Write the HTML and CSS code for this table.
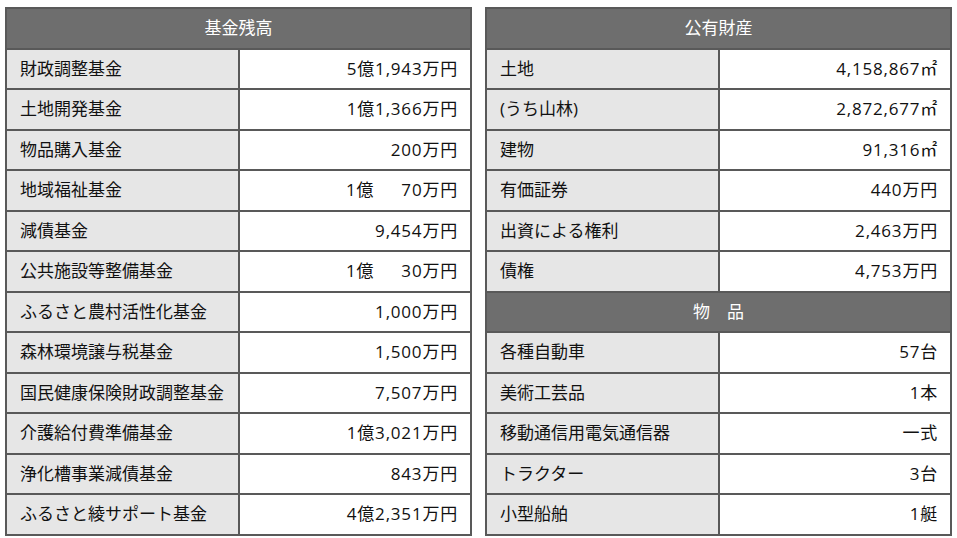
FILE: index.html
```html
<!DOCTYPE html>
<html lang="ja">
<head>
<meta charset="utf-8">
<link rel="stylesheet" href="styles.css">
</head>
<body>
<div class="wrap">
  <table class="tbl">
    <tr><th colspan="2">基金残高</th></tr>
    <tr><td class="k">財政調整基金</td><td class="v">5億1,943万円</td></tr>
    <tr><td class="k">土地開発基金</td><td class="v">1億1,366万円</td></tr>
    <tr><td class="k">物品購入基金</td><td class="v">200万円</td></tr>
    <tr><td class="k">地域福祉基金</td><td class="v">1億&emsp;&ensp;70万円</td></tr>
    <tr><td class="k">減債基金</td><td class="v">9,454万円</td></tr>
    <tr><td class="k">公共施設等整備基金</td><td class="v">1億&emsp;&ensp;30万円</td></tr>
    <tr><td class="k">ふるさと農村活性化基金</td><td class="v">1,000万円</td></tr>
    <tr><td class="k">森林環境譲与税基金</td><td class="v">1,500万円</td></tr>
    <tr><td class="k">国民健康保険財政調整基金</td><td class="v">7,507万円</td></tr>
    <tr><td class="k">介護給付費準備基金</td><td class="v">1億3,021万円</td></tr>
    <tr><td class="k">浄化槽事業減債基金</td><td class="v">843万円</td></tr>
    <tr><td class="k">ふるさと綾サポート基金</td><td class="v">4億2,351万円</td></tr>
  </table>
  <table class="tbl">
    <tr><th colspan="2">公有財産</th></tr>
    <tr><td class="k">土地</td><td class="v">4,158,867㎡</td></tr>
    <tr><td class="k">(うち山林)</td><td class="v">2,872,677㎡</td></tr>
    <tr><td class="k">建物</td><td class="v">91,316㎡</td></tr>
    <tr><td class="k">有価証券</td><td class="v">440万円</td></tr>
    <tr><td class="k">出資による権利</td><td class="v">2,463万円</td></tr>
    <tr><td class="k">債権</td><td class="v">4,753万円</td></tr>
    <tr><th colspan="2">物&emsp;品</th></tr>
    <tr><td class="k">各種自動車</td><td class="v">57台</td></tr>
    <tr><td class="k">美術工芸品</td><td class="v">1本</td></tr>
    <tr><td class="k">移動通信用電気通信器</td><td class="v">一式</td></tr>
    <tr><td class="k">トラクター</td><td class="v">3台</td></tr>
    <tr><td class="k">小型船舶</td><td class="v">1艇</td></tr>
  </table>
</div>
</body>
</html>
```
FILE: styles.css
```css
html, body {
  margin: 0;
  padding: 0;
  background: #ffffff;
}
body {
  font-family: "Open Sans", "Noto Sans CJK JP", sans-serif;
  color: #111111;
}
.wrap {
  display: flex;
  gap: 13px;
  padding: 7px 0 0 5px;
}
.tbl {
  width: 467px;
  border-collapse: collapse;
  border: 2px solid #595959;
  table-layout: fixed;
}
.tbl th,
.tbl td {
  border: 2px solid #595959;
  height: 38.5px;
  padding: 0;
  font-size: 17px;
  line-height: 20px;
  font-weight: normal;
}
.tbl th {
  background: #6e6e6e;
  color: #ffffff;
  text-align: center;
  white-space: pre;
}
.tbl td.k {
  width: 218px;
  background: #e6e6e6;
  padding-left: 13px;
  text-align: left;
}
.tbl td.v {
  background: #ffffff;
  text-align: right;
  padding-right: 12px;
  letter-spacing: 0.8px;
  white-space: pre;
}
```
